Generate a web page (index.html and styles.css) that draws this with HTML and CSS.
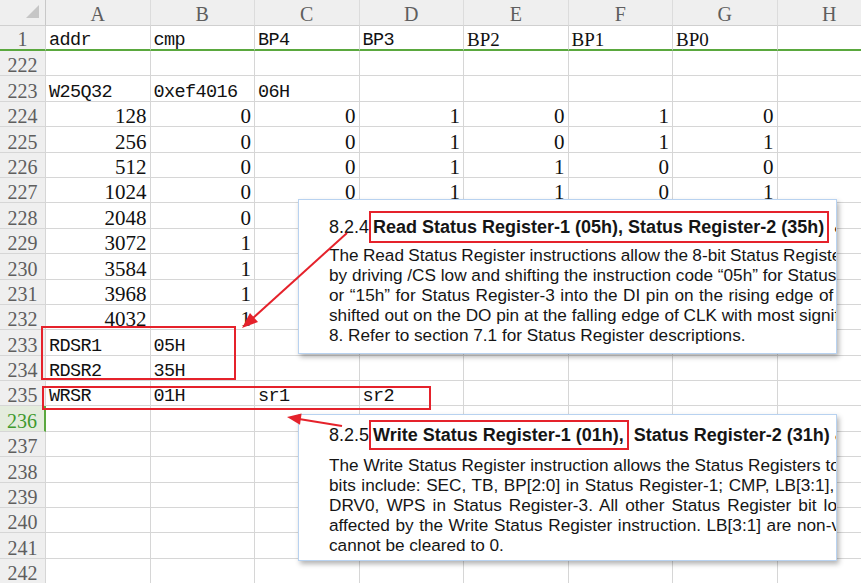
FILE: index.html
```html
<!DOCTYPE html>
<html lang="en">
<head>
    <meta charset="UTF-8">
    <meta name="viewport" content="width=device-width, initial-scale=1.0">
    <title>W25Q32 status registers</title>
    <link rel="stylesheet" href="styles.css">
</head>
<body>
    <div class="sheet">
        <div class="row head">
            <div class="corner">
                <svg width="45" height="25" viewBox="0 0 45 25"><polygon points="26,18 39,18 39,5" fill="#c6c6c6"/></svg>
            </div>
            <div>A</div><div>B</div><div>C</div><div>D</div><div>E</div><div>F</div><div>G</div><div>H</div>
        </div>

        <div class="row frozen">
            <div class="rh">1</div>
            <div class="c">addr</div><div class="c">cmp</div><div class="c">BP4</div><div class="c">BP3</div>
            <div class="c t">BP2</div><div class="c t">BP1</div><div class="c t">BP0</div><div class="c"></div>
        </div>

        <div class="row">
            <div class="rh">222</div>
            <div class="c"></div><div class="c"></div><div class="c"></div><div class="c"></div>
            <div class="c"></div><div class="c"></div><div class="c"></div><div class="c"></div>
        </div>
        <div class="row">
            <div class="rh">223</div>
            <div class="c">W25Q32</div><div class="c">0xef4016</div><div class="c">06H</div><div class="c"></div>
            <div class="c"></div><div class="c"></div><div class="c"></div><div class="c"></div>
        </div>
        <div class="row">
            <div class="rh">224</div>
            <div class="c n">128</div><div class="c n">0</div><div class="c n">0</div><div class="c n">1</div>
            <div class="c n">0</div><div class="c n">1</div><div class="c n">0</div><div class="c"></div>
        </div>
        <div class="row">
            <div class="rh">225</div>
            <div class="c n">256</div><div class="c n">0</div><div class="c n">0</div><div class="c n">1</div>
            <div class="c n">0</div><div class="c n">1</div><div class="c n">1</div><div class="c"></div>
        </div>
        <div class="row">
            <div class="rh">226</div>
            <div class="c n">512</div><div class="c n">0</div><div class="c n">0</div><div class="c n">1</div>
            <div class="c n">1</div><div class="c n">0</div><div class="c n">0</div><div class="c"></div>
        </div>
        <div class="row">
            <div class="rh">227</div>
            <div class="c n">1024</div><div class="c n">0</div><div class="c n">0</div><div class="c n">1</div>
            <div class="c n">1</div><div class="c n">0</div><div class="c n">1</div><div class="c"></div>
        </div>
        <div class="row">
            <div class="rh">228</div>
            <div class="c n">2048</div><div class="c n">0</div><div class="c n">0</div><div class="c n">1</div>
            <div class="c n">1</div><div class="c n">1</div><div class="c n">0</div><div class="c"></div>
        </div>
        <div class="row">
            <div class="rh">229</div>
            <div class="c n">3072</div><div class="c n">1</div><div class="c n">0</div><div class="c n">1</div>
            <div class="c n">0</div><div class="c n">0</div><div class="c n">1</div><div class="c"></div>
        </div>
        <div class="row">
            <div class="rh">230</div>
            <div class="c n">3584</div><div class="c n">1</div><div class="c n">0</div><div class="c n">1</div>
            <div class="c n">0</div><div class="c n">1</div><div class="c n">0</div><div class="c"></div>
        </div>
        <div class="row">
            <div class="rh">231</div>
            <div class="c n">3968</div><div class="c n">1</div><div class="c n">0</div><div class="c n">1</div>
            <div class="c n">1</div><div class="c n">0</div><div class="c n">1</div><div class="c"></div>
        </div>
        <div class="row">
            <div class="rh">232</div>
            <div class="c n">4032</div><div class="c n">1</div><div class="c n">0</div><div class="c n">1</div>
            <div class="c n">1</div><div class="c n">1</div><div class="c n">0</div><div class="c"></div>
        </div>
        <div class="row">
            <div class="rh">233</div>
            <div class="c">RDSR1</div><div class="c">05H</div><div class="c"></div><div class="c"></div>
            <div class="c"></div><div class="c"></div><div class="c"></div><div class="c"></div>
        </div>
        <div class="row">
            <div class="rh">234</div>
            <div class="c">RDSR2</div><div class="c">35H</div><div class="c"></div><div class="c"></div>
            <div class="c"></div><div class="c"></div><div class="c"></div><div class="c"></div>
        </div>
        <div class="row">
            <div class="rh">235</div>
            <div class="c">WRSR</div><div class="c">01H</div><div class="c">sr1</div><div class="c">sr2</div>
            <div class="c"></div><div class="c"></div><div class="c"></div><div class="c"></div>
        </div>
        <div class="row">
            <div class="rh active">236</div>
            <div class="c"></div><div class="c"></div><div class="c"></div><div class="c"></div>
            <div class="c"></div><div class="c"></div><div class="c"></div><div class="c"></div>
        </div>
        <div class="row">
            <div class="rh">237</div>
            <div class="c"></div><div class="c"></div><div class="c"></div><div class="c"></div>
            <div class="c"></div><div class="c"></div><div class="c"></div><div class="c"></div>
        </div>
        <div class="row">
            <div class="rh">238</div>
            <div class="c"></div><div class="c"></div><div class="c"></div><div class="c"></div>
            <div class="c"></div><div class="c"></div><div class="c"></div><div class="c"></div>
        </div>
        <div class="row">
            <div class="rh">239</div>
            <div class="c"></div><div class="c"></div><div class="c"></div><div class="c"></div>
            <div class="c"></div><div class="c"></div><div class="c"></div><div class="c"></div>
        </div>
        <div class="row">
            <div class="rh">240</div>
            <div class="c"></div><div class="c"></div><div class="c"></div><div class="c"></div>
            <div class="c"></div><div class="c"></div><div class="c"></div><div class="c"></div>
        </div>
        <div class="row">
            <div class="rh">241</div>
            <div class="c"></div><div class="c"></div><div class="c"></div><div class="c"></div>
            <div class="c"></div><div class="c"></div><div class="c"></div><div class="c"></div>
        </div>
        <div class="row">
            <div class="rh">242</div>
            <div class="c"></div><div class="c"></div><div class="c"></div><div class="c"></div>
            <div class="c"></div><div class="c"></div><div class="c"></div><div class="c"></div>
        </div>
    </div>

    <!-- datasheet clippings pasted over the sheet -->
    <div class="note note-read">
        <div class="note-title">8.2.4<span class="mark">Read Status Register-1 (05h), Status Register-2 (35h)</span> <b>&amp; Status Register-3 (15h)</b></div>
        <div class="note-body">
            <p class="tight">The Read Status Register instructions allow the 8-bit Status Registers to be read. The instruction is entered</p>
            <p>by driving /CS low and shifting the instruction code “05h” for Status Register-1, “35h” for Status Register-2</p>
            <p class="wide-1">or “15h” for Status Register-3 into the DI pin on the rising edge of CLK. The status register bits are then</p>
            <p>shifted out on the DO pin at the falling edge of CLK with most significant bit (MSB) first as shown in Figure</p>
            <p>8. Refer to section 7.1 for Status Register descriptions.</p>
        </div>
    </div>

    <div class="note note-write">
        <div class="note-title">8.2.5<span class="mark">Write Status Register-1 (01h),</span> <b>Status Register-2 (31h) &amp; Status Register-3 (11h)</b></div>
        <div class="note-body">
            <p>The Write Status Register instruction allows the Status Registers to be written. The writable Status Register</p>
            <p class="wide-1">bits include: SEC, TB, BP[2:0] in Status Register-1; CMP, LB[3:1], QE, SRL in Status Register-2; HOLD/RST,</p>
            <p class="wide-2">DRV0, WPS in Status Register-3. All other Status Register bit locations are read-only and will not be</p>
            <p class="wide-1">affected by the Write Status Register instruction. LB[3:1] are non-volatile OTP bits, once it is set to 1, it</p>
            <p>cannot be cleared to 0.</p>
        </div>
    </div>

    <!-- red annotations -->
    <svg class="marks" width="861" height="583" viewBox="0 0 861 583">
        <rect x="42" y="327" width="193" height="52"/>
        <rect x="43" y="387" width="387" height="22"/>
        <line x1="347" y1="233" x2="253" y2="318"/>
        <polygon points="242,328 258,322 250,313"/>
        <line x1="342" y1="426" x2="299" y2="419"/>
        <polygon points="287,417 301.6,413.4 300,424.7"/>
    </svg>
</body>
</html>
```

FILE: styles.css
```css
:root {
    --grid-line: #d6d6d6;
    --head-bg: #efefef;
    --head-text: #5e5e5e;
    --frozen: #5aa83e;
    --mark: #e5222b;
}
body {
    margin: 0;
    width: 861px;
    height: 583px;
    overflow: hidden;
    position: relative;
    background: #fff;
}
.sheet {
    width: 882px;
}
.row {
    display: grid;
    grid-template-columns: 46px repeat(8, 104.5px);
    height: 25.4px;
}
.row > div {
    box-sizing: border-box;
    display: flex;
    align-items: flex-end;
    overflow: hidden;
    white-space: nowrap;
    border-right: 1px solid var(--grid-line);
    border-bottom: 1px solid var(--grid-line);
}
.head {
    height: 26px;
}
.frozen {
    height: 25px;
}
.frozen > div {
    border-bottom: 2px solid var(--frozen);
}
.head > div,
.rh {
    justify-content: center;
    background: var(--head-bg);
    color: var(--head-text);
    font-family: "Liberation Serif", serif;
    font-size: 20px;
    line-height: 20px;
}
.head > div {
    border-right-color: #dcdcdc;
    border-bottom-color: #d0d0d0;
    padding-bottom: 1px;
}
.head .corner {
    display: block;
    padding: 0;
    border-right-color: #c8c8c8;
}
.corner svg {
    display: block;
}
.rh {
    border-right-color: #c8c8c8;
}
.row > .rh.active {
    background: #e4ecdd;
    color: #3f9a2e;
    border-right: 2px solid var(--frozen);
}
.c {
    padding: 0 3px;
    color: #111;
    font-family: "Liberation Mono", monospace;
    font-size: 18.5px;
    letter-spacing: -0.6px;
    line-height: 16px;
}
.c.n {
    justify-content: flex-end;
    font-family: "Liberation Serif", serif;
    font-size: 21px;
    letter-spacing: 0;
    line-height: 20px;
}
.c.t {
    font-family: "Liberation Serif", serif;
    font-size: 19px;
    letter-spacing: 0;
    line-height: 18px;
}

/* pasted datasheet notes */
.note {
    position: absolute;
    left: 298px;
    width: 539px;
    box-sizing: border-box;
    padding-left: 30px;
    overflow: hidden;
    background: #fff;
    border: 1px solid #b8d2f0;
    box-shadow: 2px 3px 5px rgba(0, 0, 0, 0.3);
    color: #151515;
    font-family: "Liberation Sans", Arial, sans-serif;
    white-space: nowrap;
}
.note-read {
    top: 199px;
    height: 155px;
    padding-top: 11px;
}
.note-write {
    top: 414px;
    height: 147px;
    padding-top: 5px;
}
.note-title {
    font-size: 18px;
    line-height: 32px;
    height: 32px;
}
.note-write .note-title {
    line-height: 30px;
    height: 30px;
}
.mark {
    display: inline-block;
    padding: 0 3px 0 2px;
    border: 2px solid var(--mark);
    font-weight: bold;
    line-height: 28px;
}
.note-write .mark {
    line-height: 26px;
}
.note-body {
    margin-top: 2px;
    font-size: 17.2px;
    line-height: 20px;
}
.note-write .note-body {
    margin-top: 5px;
}
.note-body p {
    margin: 0;
}
.tight {
    word-spacing: -0.5px;
}
.wide-1 {
    word-spacing: 0.8px;
}
.wide-2 {
    word-spacing: 2.3px;
}

.marks {
    position: absolute;
    left: 0;
    top: 0;
    pointer-events: none;
}
.marks rect,
.marks line {
    fill: none;
    stroke: var(--mark);
    stroke-width: 2;
}
.marks polygon {
    fill: var(--mark);
}
```
